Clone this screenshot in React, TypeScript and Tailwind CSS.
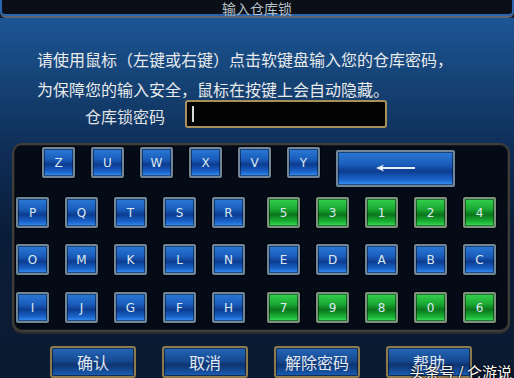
import React from "react";

const blueKey =
  "bg-[linear-gradient(180deg,#2b79d8_0%,#1a5dbb_38%,#0c3c90_58%,#1a66cf_85%,#3a92f2_100%)] border-[#72869a]";
const greenKey =
  "bg-[linear-gradient(180deg,#34d24e_0%,#1aa832_38%,#0a761c_58%,#1bb536_85%,#40e05c_100%)] border-[#7f927f]";

function Key({ label, green = false }: { label: string; green?: boolean }) {
  return (
    <div
      className={`w-[33px] h-[31px] shrink-0 border-2 rounded-[2px] flex items-center justify-center text-[12px] leading-none text-[#dce8f2] shadow-[inset_0_0_0_1px_rgba(0,0,0,0.45),0_0_1px_1px_rgba(0,0,0,0.6)] ${
        green ? greenKey : blueKey
      }`}
      style={{ fontFamily: '"DejaVu Sans", Verdana, sans-serif' }}
    >
      {label}
    </div>
  );
}

function Row({ left, right }: { left: string[]; right: string[] }) {
  return (
    <div className="flex">
      <div className="flex gap-[16px]">
        {left.map((k) => (
          <Key key={k} label={k} />
        ))}
      </div>
      <div className="flex gap-[16px] ml-[22px]">
        {right.map((k) => (
          <Key key={k} label={k} green={/[0-9]/.test(k)} />
        ))}
      </div>
    </div>
  );
}

function Btn({ label }: { label: string }) {
  return (
    <div className="w-[86px] h-[32px] shrink-0 border-2 border-[#8c7b4c] rounded-[3px] flex items-center justify-center text-[16px] leading-none text-[#e2e8ef] bg-[linear-gradient(180deg,#2467b8_0%,#164a92_45%,#0d3472_60%,#1a5fb8_100%)] shadow-[inset_0_0_0_1px_rgba(0,0,0,0.5)]">
      {label}
    </div>
  );
}

export default function App() {
  return (
    <div
      className="relative w-[514px] h-[378px] overflow-hidden bg-[#0a1a31] text-[#e6e9ec]"
      style={{ fontFamily: '"Noto Sans CJK SC", "Noto Sans", sans-serif' }}
    >
      {/* title bar */}
      <div className="h-[18px] bg-[#0a0f18] flex items-center justify-center border-b-2 border-[#5d6670] rounded-b-[6px] shadow-[inset_0_-2px_0_#2a66b0,inset_2px_0_0_#2a66b0,inset_-2px_0_0_#2a66b0]">
        <span className="text-[14px] leading-none text-[#b9c1c9] -mt-[1px]">输入仓库锁</span>
      </div>

      {/* main */}
      <div className="h-[360px] bg-[linear-gradient(180deg,#1c5596_0%,#154274_18%,#0e2c55_38%,#0a1d38_60%,#0a1a31_100%)] flex flex-col">
        <div className="pt-[26px] pl-[37px] text-[16px] leading-[30px] text-[#e8eaec]">
          <div>请使用鼠标（左键或右键）点击软键盘输入您的仓库密码，</div>
          <div>为保障您的输入安全，鼠标在按键上会自动隐藏。</div>
        </div>

        <div className="flex items-center mt-[-4px] pl-[85px]">
          <span className="text-[16px] leading-none text-[#e0e3e6] w-[80px] mt-[4px]">仓库锁密码</span>
          <div className="ml-[20px] w-[202px] h-[28px] bg-[#030303] border-2 border-[#a8905a] rounded-[3px] flex items-center pl-[5px]">
            <div className="w-[2px] h-[16px] bg-[#d8d8d8]" />
          </div>
        </div>

        {/* keyboard panel */}
        <div className="mt-[15px] ml-[12px] w-[498px] h-[190px] border-2 border-[#413e38] rounded-[10px] bg-[#040b17] shadow-[inset_0_0_0_1px_#161a20,0_2px_0_#2a2c30] p-[2px]">
          <div className="flex items-start gap-[16px] pl-[26px]">
            {["Z", "U", "W", "X", "V", "Y"].map((k) => (
              <Key key={k} label={k} />
            ))}
            <div className="mt-[3px] w-[119px] h-[37px] shrink-0 border-2 border-[#72869a] rounded-[2px] flex items-center justify-center bg-[linear-gradient(180deg,#2b79d8_0%,#1a5dbb_38%,#0c3c90_58%,#1a66cf_85%,#3a92f2_100%)] shadow-[inset_0_0_0_1px_rgba(0,0,0,0.45)]">
              <svg width="42" height="10" viewBox="0 0 42 10" className="mt-[-2px]">
                <line x1="4" y1="5" x2="40" y2="5" stroke="#e8eef4" strokeWidth="2" />
                <path d="M1 5 L9 1.5 L7 5 L9 8.5 Z" fill="#e8eef4" />
              </svg>
            </div>
          </div>
          <div className="mt-[10px]">
            <Row left={["P", "Q", "T", "S", "R"]} right={["5", "3", "1", "2", "4"]} />
          </div>
          <div className="mt-[16px]">
            <Row left={["O", "M", "K", "L", "N"]} right={["E", "D", "A", "B", "C"]} />
          </div>
          <div className="mt-[17px]">
            <Row left={["I", "J", "G", "F", "H"]} right={["7", "9", "8", "0", "6"]} />
          </div>
        </div>

        {/* buttons */}
        <div className="flex gap-[26px] pl-[50px] mt-[14px]">
          <Btn label="确认" />
          <Btn label="取消" />
          <Btn label="解除密码" />
          <Btn label="帮助" />
        </div>
      </div>

      {/* watermark */}
      <div className="absolute right-[2px] bottom-[-3px] text-[15px] leading-none text-white [text-shadow:0_0_2px_#000,0_0_2px_#000] pb-[2px]">
        头条号 / 仑游说
      </div>
    </div>
  );
}
